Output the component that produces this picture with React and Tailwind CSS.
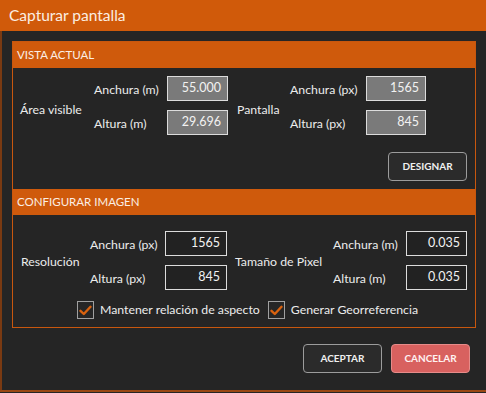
import React from 'react';

const font = { fontFamily: '"Segoe UI", Lato, "Open Sans", sans-serif' };

function Field({ value, filled }) {
	return (
		<div
			className={
				'flex h-[25px] items-center justify-end border border-[#dcdcdc] pr-[6px] text-[12.5px] text-[#f2f2f2] ' +
				(filled ? 'bg-[#7a7a7a]' : 'bg-[#222222]')
			}
		>
			{value}
		</div>
	);
}

function SectionHeader({ children }) {
	return (
		<div className="flex h-[26px] items-center bg-[#cf5a0c] pl-[4px] text-[11.5px] text-[#fbeee4]">
			{children}
		</div>
	);
}

function Check({ label }) {
	return (
		<div className="flex items-center gap-[6px]">
			<div className="flex h-[18px] w-[17px] items-center justify-center border border-[#a0a0a0] bg-[#262626]">
				<svg width="13" height="11" viewBox="0 0 13 11">
					<path d="M1.5 5.8 L4.8 9 L11.5 1.8" fill="none" stroke="#d9620f" strokeWidth="2.4" strokeLinecap="round" strokeLinejoin="round" />
				</svg>
			</div>
			<span className="text-[12.3px] text-[#ececec]">{label}</span>
		</div>
	);
}

function Button({ children, danger }) {
	return (
		<button
			className={
				'flex h-[29px] w-[79px] items-center justify-center rounded-[4px] border text-[10px] font-bold ' +
				(danger
					? 'border-[#e68b89] bg-[#d8615f] text-[#fff2f2]'
					: 'border-[#9c9c9c] bg-[#2b2b2b] text-[#f0f0f0]')
			}
		>
			{children}
		</button>
	);
}

export default function App() {
	return (
		<div className="flex h-[393px] w-[486px] flex-col bg-[#252525] text-[#ececec]" style={font}>
			<div className="flex h-[31px] shrink-0 items-center bg-[#d05a0a] pl-[9px] text-[15.5px] text-[#fbeee2]">
				Capturar pantalla
			</div>
			<div className="flex flex-1 flex-col border-l-2 border-[#7a3a12] pl-[10px] pt-[10px]">
				<div className="w-[464px] border border-[#c8570e]">
					<SectionHeader>VISTA ACTUAL</SectionHeader>
					<div className="flex flex-col pt-[8px]">
						<div className="grid grid-cols-[81px_73px_61px_62px_76px_60px] grid-rows-[25px_25px] gap-y-[9px] text-[12.3px]">
							<div className="row-span-2 flex items-center pl-[7px] pt-[10px]">Área visible</div>
							<div className="flex items-center pt-[4px]">Anchura (m)</div>
							<Field value="55.000" filled />
							<div className="row-span-2 flex items-center pl-[9px] pt-[10px]">Pantalla</div>
							<div className="flex items-center pt-[4px]">Anchura (px)</div>
							<Field value="1565" filled />
							<div className="flex items-center pt-[4px]">Altura (m)</div>
							<Field value="29.696" filled />
							<div className="flex items-center pt-[4px]">Altura (px)</div>
							<Field value="845" filled />
						</div>
						<div className="flex justify-end pb-[8px] pr-[8px] pt-[17px]">
							<Button>DESIGNAR</Button>
						</div>
					</div>
					<SectionHeader>CONFIGURAR IMAGEN</SectionHeader>
					<div className="flex flex-col pb-[8px] pt-[16px]">
						<div className="grid grid-cols-[77px_75px_62px_106px_73px_61px] grid-rows-[25px_25px] gap-y-[9px] text-[12.3px]">
							<div className="row-span-2 flex items-center pl-[8px] pt-[3px]">Resolución</div>
							<div className="flex items-center pt-[4px]">Anchura (px)</div>
							<Field value="1565" />
							<div className="row-span-2 flex items-center pl-[8px] pt-[3px]">Tamaño de Pixel</div>
							<div className="flex items-center pt-[4px]">Anchura (m)</div>
							<Field value="0.035" />
							<div className="flex items-center pt-[4px]">Altura (px)</div>
							<Field value="845" />
							<div className="flex items-center pt-[4px]">Altura (m)</div>
							<Field value="0.035" />
						</div>
						<div className="flex items-center gap-[8px] pl-[64px] pt-[11px]">
							<Check label="Mantener relación de aspecto" />
							<Check label="Generar Georreferencia" />
						</div>
					</div>
				</div>
				<div className="flex w-[466px] justify-end gap-[9px] pr-[8px] pt-[16px]">
					<Button>ACEPTAR</Button>
					<Button danger>CANCELAR</Button>
				</div>
			</div>
			<div className="h-[2px] shrink-0 bg-[#9a4712]" />
			<div className="h-[1px] shrink-0 bg-[#252525]" />
		</div>
	);
}
